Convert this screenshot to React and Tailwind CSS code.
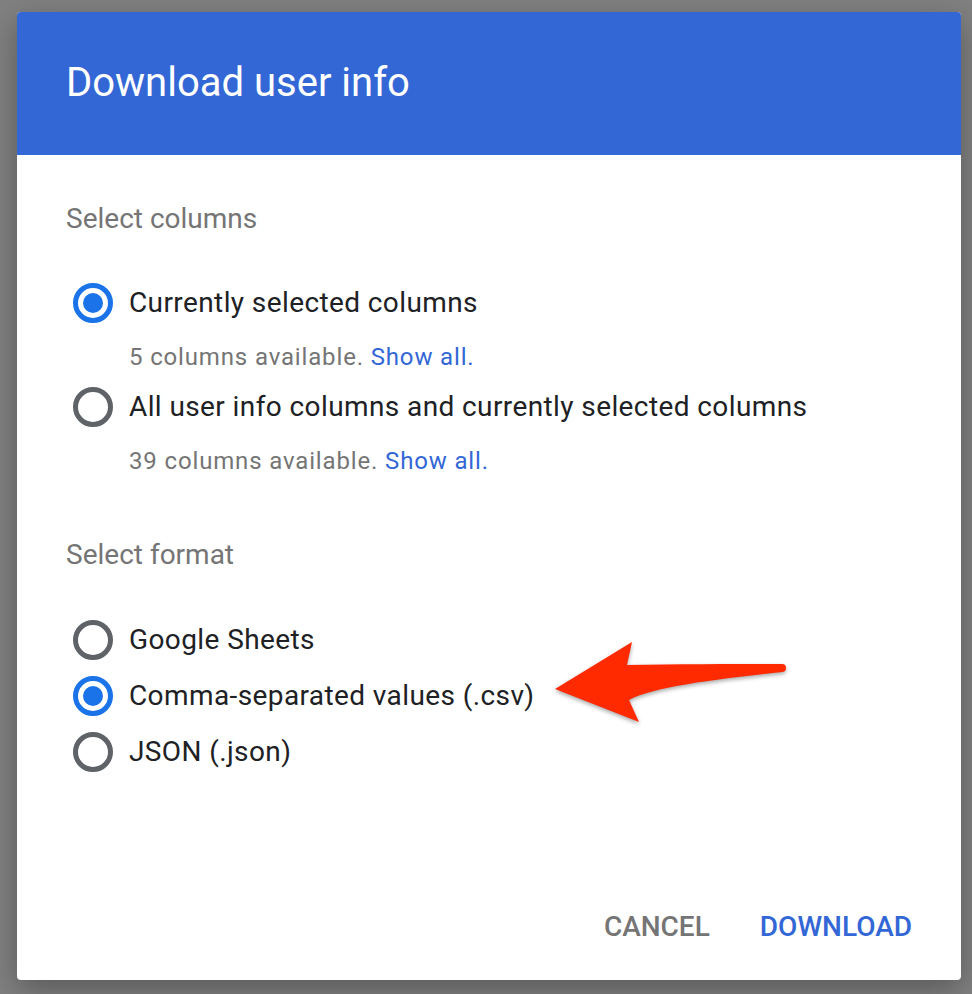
import React, { useState } from 'react';

const columnOptions = [
  { id: 'current', label: 'Currently selected columns', count: 5 },
  { id: 'all', label: 'All user info columns and currently selected columns', count: 39 },
];

const formatOptions = [
  { id: 'sheets', label: 'Google Sheets' },
  { id: 'csv', label: 'Comma-separated values (.csv)' },
  { id: 'json', label: 'JSON (.json)' },
];

function Radio({ checked }) {
  return (
    <span
      className={
        checked
          ? 'flex items-center justify-center w-[40px] h-[40px] rounded-full border-[5px] border-[#1a73e8] shrink-0'
          : 'flex items-center justify-center w-[40px] h-[40px] rounded-full border-[5px] border-[#5f6368] shrink-0'
      }
    >
      {checked && <span className="w-[20px] h-[20px] rounded-full bg-[#1a73e8]" />}
    </span>
  );
}

function RadioRow({ checked, label, onClick }) {
  return (
    <button onClick={onClick} className="flex items-center h-[56px] pl-[7px] gap-[16px] text-left">
      <Radio checked={checked} />
      <span className="text-[28px] leading-[32px] tracking-[0.4px] text-[#202124]">{label}</span>
    </button>
  );
}

export default function App() {
  const [columns, setColumns] = useState('current');
  const [format, setFormat] = useState('csv');

  return (
    <div className="w-[972px] h-[994px] bg-[#808080] pt-[12px] pl-[17px] font-['Roboto',sans-serif] relative">
      <div className="w-[944px] h-[968px] bg-white rounded-[4px] shadow-[0_10px_30px_rgba(0,0,0,0.3)] flex flex-col overflow-hidden">
        {/* Header */}
        <div className="bg-[#3367d6] pt-[47px] pb-[48px] px-[49px]">
          <h1 className="text-[40px] leading-[48px] text-white">Download user info</h1>
        </div>

        {/* Columns */}
        <div className="px-[49px] pt-[48px]">
          <p className="text-[28px] leading-[32px] text-[#757575]">Select columns</p>
          <div className="mt-[40px] flex flex-col">
            {columnOptions.map((opt) => (
              <div key={opt.id} className="flex flex-col">
                <RadioRow
                  checked={columns === opt.id}
                  label={opt.label}
                  onClick={() => setColumns(opt.id)}
                />
                <p className="pl-[63px] mt-[10px] mb-[6px] text-[24px] leading-[32px] tracking-[0.85px] text-[#757575]">
                  {opt.count} columns available. <a className="text-[#3367d6]">Show all.</a>
                </p>
              </div>
            ))}
          </div>
        </div>

        {/* Format */}
        <div className="px-[49px] pt-[56px]">
          <p className="text-[28px] leading-[32px] text-[#757575]">Select format</p>
          <div className="mt-[41px] flex flex-col">
            {formatOptions.map((opt) => (
              <RadioRow
                key={opt.id}
                checked={format === opt.id}
                label={opt.label}
                onClick={() => setFormat(opt.id)}
              />
            ))}
          </div>
        </div>

        {/* Actions */}
        <div className="mt-auto mb-[17px] h-[72px] flex items-center justify-end gap-[50px] pr-[49px]">
          <button className="text-[28px] font-medium text-[#757575]">CANCEL</button>
          <button className="text-[28px] font-medium text-[#3367d6]">DOWNLOAD</button>
        </div>
      </div>

      {/* annotation arrow */}
      <svg
        className="absolute left-[540px] top-[620px] w-[280px] h-[120px] drop-shadow-[0_2px_2px_rgba(0,0,0,0.35)]"
        viewBox="0 0 280 120"
      >
        <path
          d="M15 69 L92 22 L87 45 C140 44 200 44 242 44 A4 4 0 0 1 242 52 C180 59 115 66 89 80 L99 102 Z"
          fill="#ff2a00"
        />
      </svg>
    </div>
  );
}
